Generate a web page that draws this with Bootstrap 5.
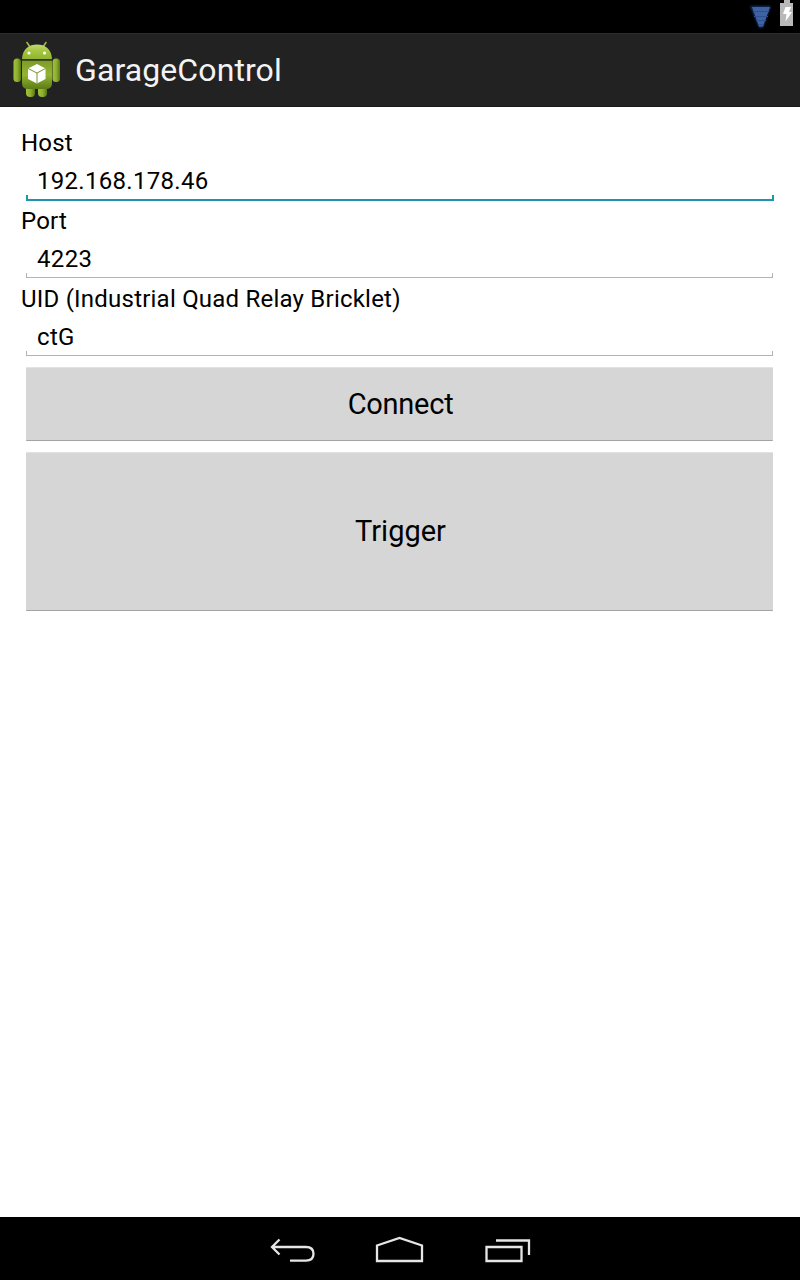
<!DOCTYPE html>
<html lang="en">
<head>
<meta charset="utf-8">
<meta name="viewport" content="width=device-width, initial-scale=1">
<title>GarageControl</title>
<link href="https://cdn.jsdelivr.net/npm/bootstrap@5.3.0/dist/css/bootstrap.min.css" rel="stylesheet">
<style>
body { font-family: Roboto, "Liberation Sans", sans-serif; color: #000; height: 1280px; overflow: hidden; }
.status-bar { height: 33px; background: #000; padding-right: 7px; }
.action-bar { height: 74px; background: #222; padding: 0 0 0 13px; border-bottom: 1px solid #1a1a1a; border-top: 1px solid #2b2b2b; }
.app-title { font-size: 32px; line-height: 40px; color: #f3f3f3; margin-left: 14px; letter-spacing: .1px; }
.app-form { padding: 22px 21px 0; }
.field-label { display: block; font-size: 24px; line-height: 28px; letter-spacing: .22px; }
.field-box { height: 50px; padding: 10px 5px 0; }
.field-input { display: block; width: 748px; height: 33px; font-size: 24px; line-height: 28px; padding: 0 11px 5px; border: 0; color: #000; outline: 0; letter-spacing: .35px;
  background: linear-gradient(#b3b3b3,#b3b3b3) 0 100%/747px 1px no-repeat, linear-gradient(#b3b3b3,#b3b3b3) 0 100%/1px 5px no-repeat, linear-gradient(#b3b3b3,#b3b3b3) 746px 100%/1px 5px no-repeat; }
.field-input.is-active { height: 34px; padding-bottom: 6px; letter-spacing: .3px;
  background: linear-gradient(#1f94b0,#1f94b0) 0 100%/748px 2px no-repeat, linear-gradient(#1f94b0,#1f94b0) 0 100%/2px 6px no-repeat, linear-gradient(#1f94b0,#1f94b0) 746px 100%/2px 6px no-repeat; }
.holo-btn, .holo-btn:hover { width: 747px; margin-left: 5px; font-size: 29px; color: #000; background: #d6d6d6; border: 0; border-top: 1px solid #e2e2e2; border-bottom: 1px solid #a3a3a3; border-radius: 1px; padding: 0 0 0 2px; }
.btn-connect { height: 74px; margin-top: 4px; padding-top: 2px !important; letter-spacing: -.25px; }
.btn-trigger { height: 159px; margin-top: 11px; }
.nav-keys { height: 63px; background: #000; }
</style>
</head>
<body class="bg-white d-flex flex-column">
<div class="status-bar d-flex justify-content-end align-items-start flex-shrink-0">
  <svg width="50" height="33" viewBox="0 0 50 33" aria-label="Signal and battery">
    <defs><filter id="glow" x="-30%" y="-30%" width="160%" height="160%"><feGaussianBlur stdDeviation="1.1"/></filter></defs>
    <path d="M7 6h21l-8 22h-4z" fill="#17315f" filter="url(#glow)"/>
    <path d="M9 7h18l-7 19.500h-4z" fill="#3f62a5"/>
    <path d="M10 11.500h16M11 16.500h14M13 20.500h10M15 24.500h6" stroke="#2f4f8e"/>
    <path d="M41 0h6v3h4v23H37V3h4z" fill="#b9b9b9"/>
    <path d="M42.500 7h5.500l-2 5h3L42.500 21.500l1-7.500H40z" fill="#fff"/>
  </svg>
</div>
<header class="action-bar d-flex align-items-center flex-shrink-0">
  <svg width="48" height="58" viewBox="0 0 48 58" aria-label="Android">
    <defs>
      <linearGradient id="limb" x1="0" x2="1"><stop stop-color="#9fc13c"/><stop offset=".5" stop-color="#8eb02f"/><stop offset="1" stop-color="#5a7515"/></linearGradient>
      <linearGradient id="torso" x2="0" y2="1"><stop stop-color="#7d9b27"/><stop offset=".5" stop-color="#93b531"/><stop offset="1" stop-color="#5d7b17"/></linearGradient>
      <linearGradient id="dome" x2="0" y2="1"><stop stop-color="#c2d96f"/><stop offset=".5" stop-color="#a2c53d"/><stop offset="1" stop-color="#90b332"/></linearGradient>
    </defs>
    <path d="M14 1.500l4 6M33 1.500l-4 6" stroke="#9fbf3c" stroke-width="1.600" stroke-linecap="round"/>
    <rect x="13" y="42" width="9" height="14" rx="4" fill="url(#limb)"/>
    <rect x="25" y="42" width="9" height="14" rx="4" fill="url(#limb)"/>
    <rect x=".5" y="17.500" width="7.500" height="23.500" rx="3.500" fill="url(#limb)"/>
    <rect x="39.500" y="17.500" width="7.500" height="23.500" rx="3.500" fill="url(#limb)"/>
    <path d="M9 19.500h30V42q0 6-6 6H15q-6 0-6-6z" fill="url(#torso)"/>
    <path d="M9 18C9.500 8 16 3.500 24 3.500S38.500 8 39 18z" fill="url(#dome)"/>
    <path d="M9 18.800h30" stroke="#33420f" stroke-width="1.300"/>
    <circle cx="16" cy="12" r="1.600" fill="#fff"/><circle cx="31.500" cy="12" r="1.600" fill="#fff"/>
    <path d="M24 23l8.500 4.500v10.500L24 42.500 15 38V27.500z" fill="#fff"/>
    <path d="M15 27.500l9 4.500 8.500-4.500M24 32v10.500" fill="none" stroke="#78952b" stroke-width="1"/>
  </svg>
  <h1 class="app-title mb-0 fw-normal">GarageControl</h1>
</header>
<main class="app-form flex-grow-1">
  <label class="field-label" for="host">Host</label>
  <div class="field-box"><input class="field-input is-active" id="host" value="192.168.178.46"></div>
  <label class="field-label" for="port">Port</label>
  <div class="field-box"><input class="field-input" id="port" value="4223"></div>
  <label class="field-label" for="uid">UID (Industrial Quad Relay Bricklet)</label>
  <div class="field-box"><input class="field-input" id="uid" value="ctG"></div>
  <button class="btn holo-btn btn-connect d-block" type="button">Connect</button>
  <button class="btn holo-btn btn-trigger d-block" type="button">Trigger</button>
</main>
<nav class="nav-keys d-flex justify-content-center flex-shrink-0">
  <svg width="290" height="63" viewBox="255 1217 290 63" fill="none" stroke="#e6e6e6" stroke-width="2.300" aria-label="Back, home, recent apps">
    <path d="M279.500 1239.500l-7.500 7.500 7.500 7.500M272 1247H306q7.500 0 7.500 6.800t-7.500 6.800H290"/>
    <path d="M377 1261v-15.500l22.500-7.500 22.500 7.500V1261z"/>
    <path d="M486.500 1247h35v14h-35zM496 1240.500h33v14.500"/>
  </svg>
</nav>
<script src="https://cdn.jsdelivr.net/npm/bootstrap@5.3.0/dist/js/bootstrap.bundle.min.js"></script>
</body>
</html>
